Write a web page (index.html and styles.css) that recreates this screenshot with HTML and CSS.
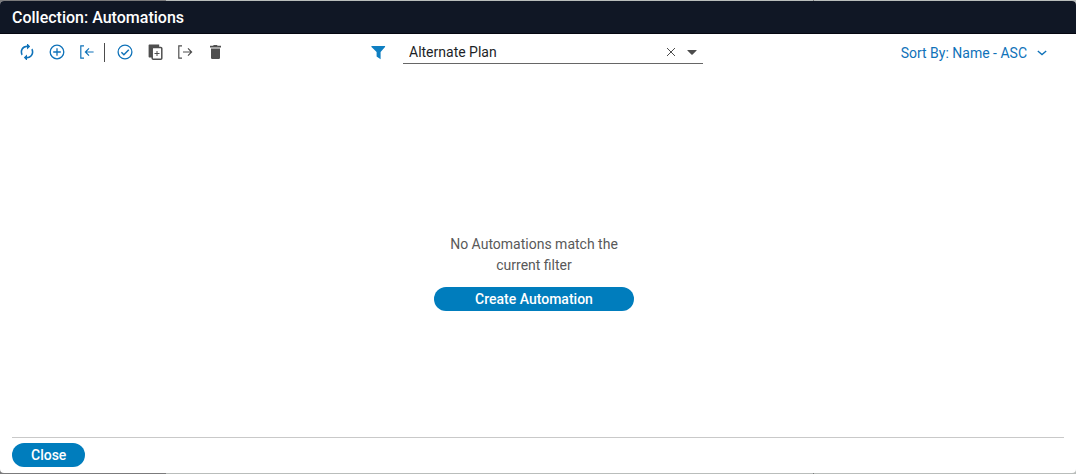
FILE: index.html
```
<!DOCTYPE html>
<html lang="en">
<head>
<meta charset="utf-8">
<title>Collection: Automations</title>
<link rel="stylesheet" href="styles.css">
</head>
<body>
<div class="dialog" role="dialog" aria-labelledby="dialog-title">
  <header class="titlebar"><h1 class="title" id="dialog-title">Collection: Automations</h1></header>
  <div class="toolbar">
    <div class="actions">
      <button class="icon-btn" type="button" aria-label="Refresh">
        <svg class="icon" viewBox="2 2 20 20"><path fill="currentColor" d="M12 6v3l4-4-4-4v3c-4.42 0-8 3.58-8 8 0 1.57.46 3.03 1.24 4.26L6.7 14.8A5.87 5.87 0 0 1 6 12c0-3.31 2.69-6 6-6zm6.76 1.74L17.3 9.2c.44.84.7 1.79.7 2.8 0 3.31-2.69 6-6 6v-3l-4 4 4 4v-3c4.42 0 8-3.58 8-8 0-1.57-.46-3.03-1.24-4.26z"/></svg>
      </button>
      <button class="icon-btn" type="button" aria-label="Add">
        <svg class="icon" viewBox="0 0 16 16" fill="none" stroke="currentColor" stroke-width="1.3"><circle cx="8" cy="8" r="6.8"/><path d="M8 4.2v7.6M4.2 8h7.6"/></svg>
      </button>
      <button class="icon-btn" type="button" aria-label="Import">
        <svg class="icon" viewBox="0 0 16 16" fill="none" stroke="currentColor" stroke-width="1.2"><path d="M5 1.8H1.8v12.4H5M14.6 8H6.5M10 4.4L6.4 8l3.6 3.6"/></svg>
      </button>
      <span class="divider"></span>
      <button class="icon-btn" type="button" aria-label="Select all">
        <svg class="icon" viewBox="0 0 16 16" fill="none" stroke="currentColor" stroke-width="1.3"><circle cx="8" cy="8" r="6.9"/><path stroke-width="1.5" d="M4.4 8.3l2.5 2.5 4.9-5"/></svg>
      </button>
      <button class="icon-btn muted" type="button" aria-label="Duplicate">
        <svg class="icon" viewBox="0 0 16 16" fill="none" stroke="currentColor"><path fill="currentColor" stroke="none" d="M2.6.6h9.6v2.8H5v10H2.6c-.6 0-1-.4-1-1V1.6c0-.6.4-1 1-1z"/><rect x="5.2" y="3.6" width="9.6" height="11.6" rx="1" stroke-width="1.5" fill="#fff"/><path stroke-width="1" d="M10 7v5M7.5 9.5h5"/></svg>
      </button>
      <button class="icon-btn muted" type="button" aria-label="Export">
        <svg class="icon" viewBox="0 0 16 16" fill="none" stroke="currentColor" stroke-width="1.2"><path d="M5 1.8H1.8v12.4H5M6 8h8.4M11 4.4L14.6 8 11 11.6"/></svg>
      </button>
      <button class="icon-btn muted" type="button" aria-label="Delete">
        <svg class="icon" viewBox="0 0 16 16" fill="currentColor"><path d="M3 1.8h3L6.8 1h3.4l.8 1.8-.2-1H14v1.8H3zM4 4.4h9v9c0 .9-.7 1.6-1.6 1.6H5.6c-.9 0-1.6-.7-1.6-1.6z"/></svg>
      </button>
    </div>
    <div class="filter">
      <svg class="icon funnel" viewBox="0 0 16 16" fill="currentColor" aria-hidden="true"><path d="M2 2h12.6c.6 0 .7.5.4.9L10.6 8v7.2L6.6 12.6V8L1.5 2.9c-.3-.4-.1-.9.5-.9z"/></svg>
      <div class="field">
        <input class="field-input" type="text" aria-label="Filter" value="Alternate Plan">
        <button class="field-btn" type="button" aria-label="Clear filter">
          <svg class="glyph" viewBox="0 0 10 10" fill="none" stroke="currentColor"><path d="M1 1l8 8M9 1L1 9"/></svg>
        </button>
        <button class="field-btn" type="button" aria-label="Open filters">
          <svg class="glyph" viewBox="0 0 10 10" fill="currentColor"><path d="M.6 3h8.8c.4 0 .4.3.2.6L5.6 7.4c-.4.4-.8.4-1.2 0L.4 3.6C.2 3.3.2 3 .6 3z"/></svg>
        </button>
      </div>
    </div>
    <button class="sort" type="button">Sort By: Name - ASC
      <svg class="glyph" viewBox="0 0 10 10" fill="none" stroke="currentColor" stroke-width="1.3"><path d="M.8 3L5 6.6 9.2 3"/></svg>
    </button>
  </div>
  <main class="empty">
    <p class="message">No Automations match the current filter</p>
    <button class="primary create" type="button">Create Automation</button>
  </main>
  <footer class="footer"><button class="primary close" type="button">Close</button></footer>
</div>
</body>
</html>
```
FILE: styles.css
```
* { box-sizing: border-box; }
body {
  margin: 0;
  min-height: 100vh;
  display: flex;
  padding: 1px 0;
  background: linear-gradient(90deg, #7b7b7c 166px, #b9bdbb 166px 813px, #7b7b7c 813px 814px, #b9bdbb 814px);
  font-family: Roboto, "Liberation Sans", sans-serif;
  font-size: 14px;
}
button { margin: 0; padding: 0; border: 0; background: none; font: inherit; cursor: pointer; }
.dialog {
  flex: 1;
  display: flex;
  flex-direction: column;
  background: #fff;
  border-radius: 4px;
  overflow: hidden;
}
.titlebar {
  height: 33px;
  padding: 1px 12px 0;
  display: flex;
  align-items: center;
  background: #101725;
  border-bottom: 1px solid #050711;
}
.title { margin: 0; font-size: 16px; font-weight: 500; color: #fff; }
.toolbar {
  display: grid;
  grid-template-columns: 1fr 333px 1fr;
  align-items: center;
  height: 36px;
  padding: 0 22px 0 19px;
}
.actions { display: flex; align-items: center; gap: 14px; color: #0f72b9; }
.icon-btn { display: flex; color: inherit; }
.icon { width: 16px; height: 16px; }
.muted { color: #4f4f4f; }
.divider { width: 1px; height: 19px; margin: 0 -2px 0 -5px; background: #4c4c4c; }
.filter { display: flex; align-items: center; gap: 17px; }
.funnel { color: #0f7fc2; flex: none; }
.field {
  flex: 1;
  display: flex;
  align-items: center;
  gap: 11px;
  height: 24px;
  padding: 0 6px;
  border-bottom: 1px solid #666;
}
.field-input {
  flex: 1;
  min-width: 0;
  padding: 0;
  border: 0;
  outline: 0;
  background: none;
  font: inherit;
  color: #1d1f27;
}
.field-btn { display: flex; color: #4c4c4c; }
.glyph { width: 10px; height: 10px; }
.sort {
  justify-self: end;
  display: flex;
  align-items: center;
  gap: 10px;
  padding: 1px 7px 0 0;
  color: #0f72b9;
}
.empty {
  flex: 1;
  display: flex;
  flex-direction: column;
  align-items: center;
  justify-content: center;
  gap: 11px;
  padding: 38px 8px 0 0;
}
.message { width: 200px; margin: 0; line-height: 21px; text-align: center; color: #595959; }
.primary { height: 24px; border-radius: 12px; background: #007dbd; color: #fff; font-weight: 500; }
.create { width: 200px; }
.close { padding: 0 19px; }
.footer { margin: 0 12px; padding: 5px 0 6px; border-top: 1px solid #c9c9c9; }
```
